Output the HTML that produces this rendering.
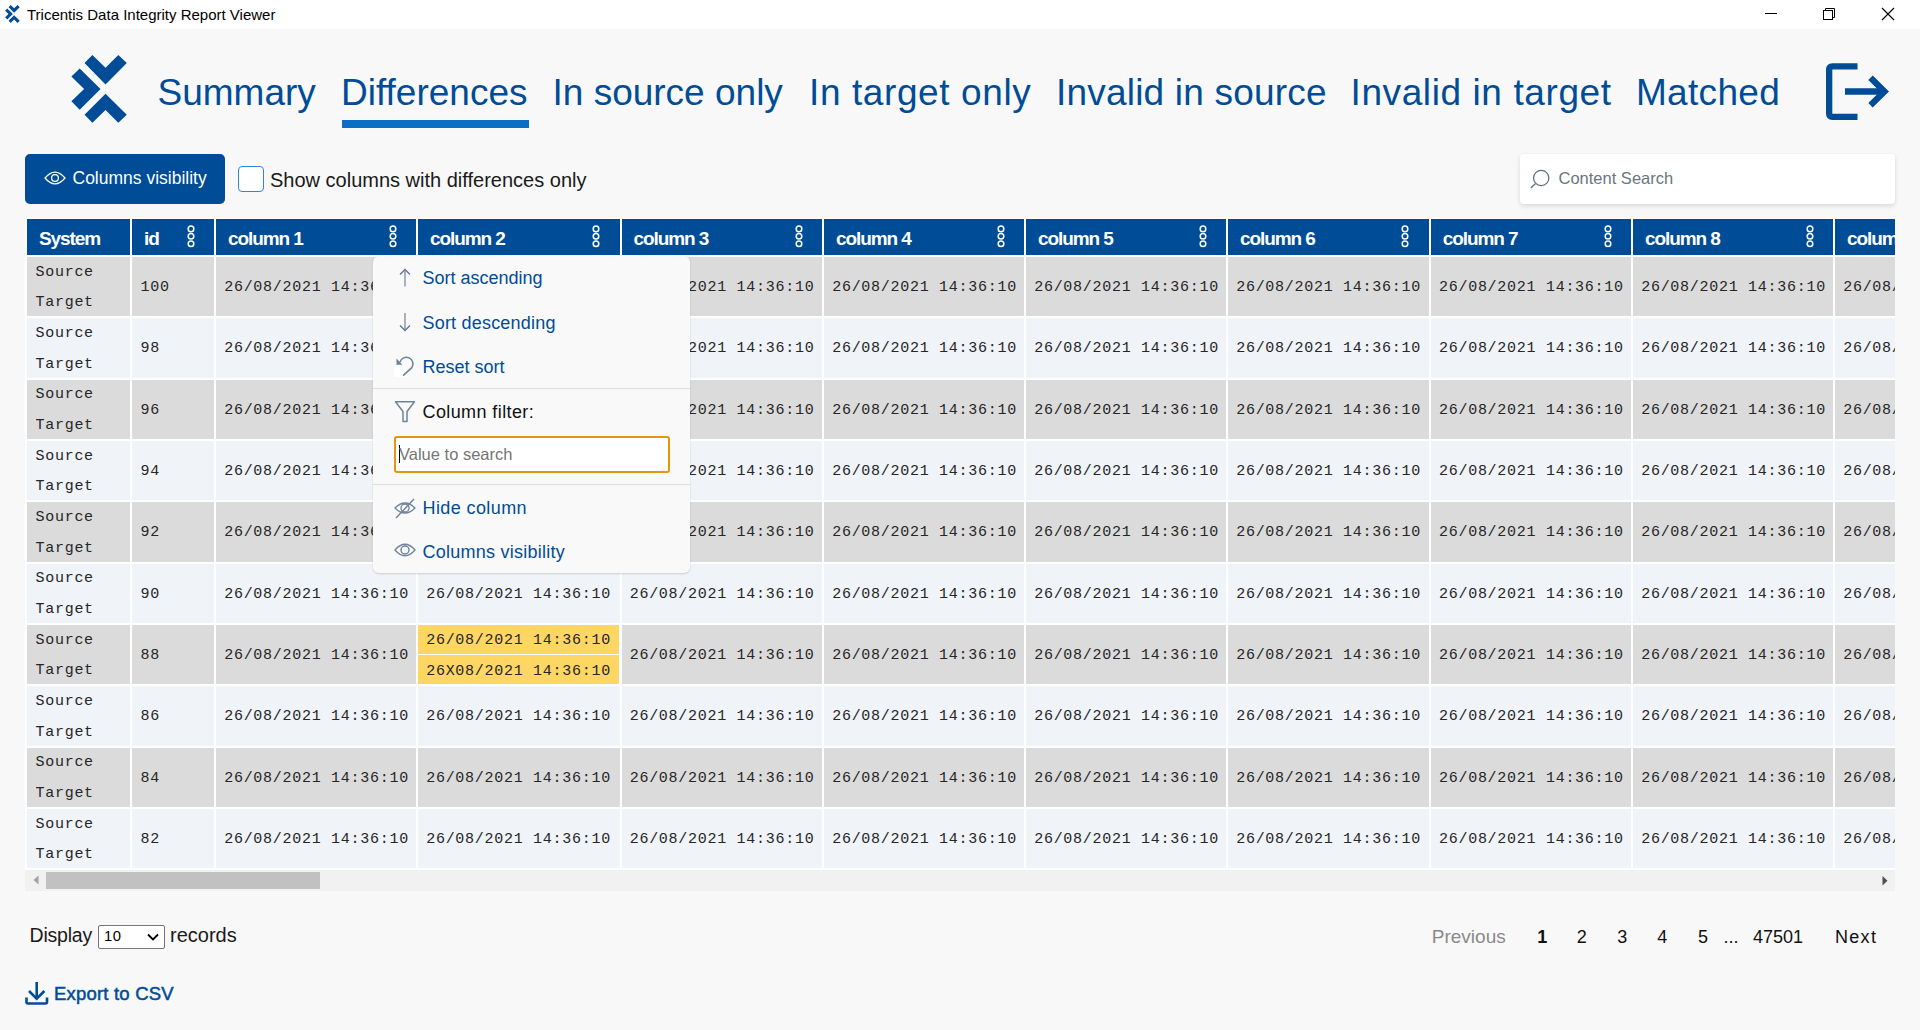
<!DOCTYPE html>
<html><head><meta charset="utf-8"><title>Tricentis Data Integrity Report Viewer</title>
<style>
html,body{margin:0;padding:0}
body{width:1920px;height:1030px;overflow:hidden;background:#f8f8f8;position:relative;font-family:'Liberation Sans', sans-serif}
.t{position:absolute;white-space:pre}
.r{position:absolute}
</style></head><body>
<div class="r" style="left:0.00px;top:0.00px;width:1920.00px;height:29.00px;background:#ffffff;"></div>
<svg class="r" style="left:4.8px;top:4.9px" width="14.8" height="18" viewBox="71 55 56 68"><polygon fill="#004c97" points="84.5,63 92.4,55 105.5,67.7 118.3,55 126.8,63 105.5,84.5"/><polygon fill="#004c97" points="71.4,76.5 79.7,68.4 100.5,88.9 79.7,109.7 71.4,101.3 84.1,88.9"/><polygon fill="#004c97" points="84.5,114.7 92.4,122.8 105.5,110 118.3,122.8 126.8,114.7 105.5,93.7"/></svg>
<div class="t" style="left:27.00px;top:7.30px;font-size:15px;line-height:15px;color:#000;font-family:'Liberation Sans', sans-serif;">Tricentis Data Integrity Report Viewer</div>
<div class="r" style="left:1765.00px;top:12.50px;width:12.00px;height:1.00px;background:#000;"></div>
<svg class="r" style="left:1822px;top:7px" width="14" height="14" viewBox="0 0 14 14"><rect x="1.5" y="3.5" width="9" height="9" fill="none" stroke="#000" stroke-width="1"/><path d="M3.5 3.5 V1.5 H12.5 V10.5 H10.5" fill="none" stroke="#000" stroke-width="1"/></svg>
<svg class="r" style="left:1881px;top:7px" width="14" height="14" viewBox="0 0 14 14"><path d="M1 1 L13 13 M13 1 L1 13" stroke="#000" stroke-width="1.1"/></svg>
<svg class="r" style="left:71px;top:55px" width="56" height="68" viewBox="71 55 56 68"><polygon fill="#004c97" points="84.5,63 92.4,55 105.5,67.7 118.3,55 126.8,63 105.5,84.5"/><polygon fill="#004c97" points="71.4,76.5 79.7,68.4 100.5,88.9 79.7,109.7 71.4,101.3 84.1,88.9"/><polygon fill="#004c97" points="84.5,114.7 92.4,122.8 105.5,110 118.3,122.8 126.8,114.7 105.5,93.7"/></svg>
<div class="t" style="left:157.50px;top:73.67px;font-size:37px;line-height:37px;color:#004c97;font-family:'Liberation Sans', sans-serif;letter-spacing:0px;">Summary</div>
<div class="t" style="left:341.00px;top:73.67px;font-size:37px;line-height:37px;color:#004c97;font-family:'Liberation Sans', sans-serif;letter-spacing:0px;">Differences</div>
<div class="t" style="left:552.50px;top:73.67px;font-size:37px;line-height:37px;color:#004c97;font-family:'Liberation Sans', sans-serif;letter-spacing:0px;">In source only</div>
<div class="t" style="left:809.00px;top:73.67px;font-size:37px;line-height:37px;color:#004c97;font-family:'Liberation Sans', sans-serif;letter-spacing:0.6px;">In target only</div>
<div class="t" style="left:1056.00px;top:73.67px;font-size:37px;line-height:37px;color:#004c97;font-family:'Liberation Sans', sans-serif;letter-spacing:0.2px;">Invalid in source</div>
<div class="t" style="left:1350.50px;top:73.67px;font-size:37px;line-height:37px;color:#004c97;font-family:'Liberation Sans', sans-serif;letter-spacing:0.6px;">Invalid in target</div>
<div class="t" style="left:1636.00px;top:73.67px;font-size:37px;line-height:37px;color:#004c97;font-family:'Liberation Sans', sans-serif;letter-spacing:0.3px;">Matched</div>
<div class="r" style="left:342.00px;top:120.00px;width:187.00px;height:7.50px;background:#0a6ec4;"></div>
<svg class="r" style="left:1820px;top:58px" width="75" height="68" viewBox="0 0 75 68"><path d="M37.5 8.35 H12.5 Q9.15 8.35 9.15 11.7 V55.5 Q9.15 58.85 12.5 58.85 H37.5" fill="none" stroke="#004c97" stroke-width="6.3"/><path d="M25 33.5 H64" stroke="#004c97" stroke-width="6.5"/><path d="M50.5 19.7 L64.5 33.5 L50.5 47.3" fill="none" stroke="#004c97" stroke-width="6.3"/></svg>
<div class="r" style="left:25.00px;top:154.00px;width:200.00px;height:50.00px;background:#004c97;border-radius:5px"></div>
<svg class="r" style="left:43px;top:170.4px" width="24" height="16" viewBox="0 0 24 16"><path d="M2 8 Q12 -3.8 22 8 Q12 19.8 2 8 Z" fill="none" stroke="#fff" stroke-width="1.25"/><circle cx="12" cy="8" r="3.4" fill="none" stroke="#fff" stroke-width="1.3"/></svg>
<div class="t" style="left:72.50px;top:170.18px;font-size:17.5px;line-height:17.5px;color:#fff;font-family:'Liberation Sans', sans-serif;">Columns visibility</div>
<div class="r" style="left:238.00px;top:166.00px;width:26.00px;height:26.00px;background:#fff;box-sizing:border-box;border:1.3px solid #2f86da;border-radius:4px"></div>
<div class="t" style="left:270.00px;top:169.87px;font-size:20px;line-height:20px;color:#1a1a1a;font-family:'Liberation Sans', sans-serif;">Show columns with differences only</div>
<div class="r" style="left:1520.00px;top:154.00px;width:375.00px;height:50.00px;background:#fff;border-radius:4px;box-shadow:0 2px 5px rgba(0,0,0,0.13)"></div>
<svg class="r" style="left:1528px;top:166px" width="24" height="24" viewBox="0 0 24 24"><circle cx="13.2" cy="12" r="7.65" fill="none" stroke="#5f6f80" stroke-width="1.25"/><path d="M7.4 17.8 L2.7 22" stroke="#5f6f80" stroke-width="1.3"/></svg>
<div class="t" style="left:1558.50px;top:170.03px;font-size:16.5px;line-height:16.5px;color:#6c757d;font-family:'Liberation Sans', sans-serif;">Content Search</div>
<div class="r" style="left:25.00px;top:217.00px;width:1870.00px;height:653.00px;background:#ffffff;"></div>
<div style="position:absolute;left:25px;top:217px;width:1870px;height:674px;overflow:hidden">
<div class="r" style="left:2.00px;top:2.00px;width:103.00px;height:36.00px;background:#004c97;"></div>
<div class="t" style="left:14.00px;top:11.71px;font-size:19px;line-height:19px;color:#fff;font-family:'Liberation Sans', sans-serif;letter-spacing:-1.1px;font-weight:bold">System</div>
<div class="r" style="left:107.00px;top:2.00px;width:82.00px;height:36.00px;background:#004c97;"></div>
<div class="t" style="left:119.00px;top:11.71px;font-size:19px;line-height:19px;color:#fff;font-family:'Liberation Sans', sans-serif;letter-spacing:-1.1px;font-weight:bold">id</div>
<svg class="r" style="left:160.50px;top:7px" width="10" height="24" viewBox="0 0 10 24"><circle cx="5" cy="4.9" r="2.8" fill="none" stroke="#fff" stroke-width="1.5"/><circle cx="5" cy="12.3" r="2.8" fill="none" stroke="#fff" stroke-width="1.5"/><circle cx="5" cy="19.8" r="2.8" fill="none" stroke="#fff" stroke-width="1.5"/></svg>
<div class="r" style="left:191.00px;top:2.00px;width:200.00px;height:36.00px;background:#004c97;"></div>
<div class="t" style="left:203.00px;top:11.71px;font-size:19px;line-height:19px;color:#fff;font-family:'Liberation Sans', sans-serif;letter-spacing:-1.1px;font-weight:bold">column 1</div>
<svg class="r" style="left:362.50px;top:7px" width="10" height="24" viewBox="0 0 10 24"><circle cx="5" cy="4.9" r="2.8" fill="none" stroke="#fff" stroke-width="1.5"/><circle cx="5" cy="12.3" r="2.8" fill="none" stroke="#fff" stroke-width="1.5"/><circle cx="5" cy="19.8" r="2.8" fill="none" stroke="#fff" stroke-width="1.5"/></svg>
<div class="r" style="left:393.00px;top:2.00px;width:201.50px;height:36.00px;background:#004c97;"></div>
<div class="t" style="left:405.00px;top:11.71px;font-size:19px;line-height:19px;color:#fff;font-family:'Liberation Sans', sans-serif;letter-spacing:-1.1px;font-weight:bold">column 2</div>
<svg class="r" style="left:566.00px;top:7px" width="10" height="24" viewBox="0 0 10 24"><circle cx="5" cy="4.9" r="2.8" fill="none" stroke="#fff" stroke-width="1.5"/><circle cx="5" cy="12.3" r="2.8" fill="none" stroke="#fff" stroke-width="1.5"/><circle cx="5" cy="19.8" r="2.8" fill="none" stroke="#fff" stroke-width="1.5"/></svg>
<div class="r" style="left:596.50px;top:2.00px;width:200.50px;height:36.00px;background:#004c97;"></div>
<div class="t" style="left:608.50px;top:11.71px;font-size:19px;line-height:19px;color:#fff;font-family:'Liberation Sans', sans-serif;letter-spacing:-1.1px;font-weight:bold">column 3</div>
<svg class="r" style="left:768.50px;top:7px" width="10" height="24" viewBox="0 0 10 24"><circle cx="5" cy="4.9" r="2.8" fill="none" stroke="#fff" stroke-width="1.5"/><circle cx="5" cy="12.3" r="2.8" fill="none" stroke="#fff" stroke-width="1.5"/><circle cx="5" cy="19.8" r="2.8" fill="none" stroke="#fff" stroke-width="1.5"/></svg>
<div class="r" style="left:799.00px;top:2.00px;width:200.00px;height:36.00px;background:#004c97;"></div>
<div class="t" style="left:811.00px;top:11.71px;font-size:19px;line-height:19px;color:#fff;font-family:'Liberation Sans', sans-serif;letter-spacing:-1.1px;font-weight:bold">column 4</div>
<svg class="r" style="left:970.50px;top:7px" width="10" height="24" viewBox="0 0 10 24"><circle cx="5" cy="4.9" r="2.8" fill="none" stroke="#fff" stroke-width="1.5"/><circle cx="5" cy="12.3" r="2.8" fill="none" stroke="#fff" stroke-width="1.5"/><circle cx="5" cy="19.8" r="2.8" fill="none" stroke="#fff" stroke-width="1.5"/></svg>
<div class="r" style="left:1001.00px;top:2.00px;width:200.00px;height:36.00px;background:#004c97;"></div>
<div class="t" style="left:1013.00px;top:11.71px;font-size:19px;line-height:19px;color:#fff;font-family:'Liberation Sans', sans-serif;letter-spacing:-1.1px;font-weight:bold">column 5</div>
<svg class="r" style="left:1172.50px;top:7px" width="10" height="24" viewBox="0 0 10 24"><circle cx="5" cy="4.9" r="2.8" fill="none" stroke="#fff" stroke-width="1.5"/><circle cx="5" cy="12.3" r="2.8" fill="none" stroke="#fff" stroke-width="1.5"/><circle cx="5" cy="19.8" r="2.8" fill="none" stroke="#fff" stroke-width="1.5"/></svg>
<div class="r" style="left:1203.00px;top:2.00px;width:200.80px;height:36.00px;background:#004c97;"></div>
<div class="t" style="left:1215.00px;top:11.71px;font-size:19px;line-height:19px;color:#fff;font-family:'Liberation Sans', sans-serif;letter-spacing:-1.1px;font-weight:bold">column 6</div>
<svg class="r" style="left:1375.30px;top:7px" width="10" height="24" viewBox="0 0 10 24"><circle cx="5" cy="4.9" r="2.8" fill="none" stroke="#fff" stroke-width="1.5"/><circle cx="5" cy="12.3" r="2.8" fill="none" stroke="#fff" stroke-width="1.5"/><circle cx="5" cy="19.8" r="2.8" fill="none" stroke="#fff" stroke-width="1.5"/></svg>
<div class="r" style="left:1405.80px;top:2.00px;width:200.20px;height:36.00px;background:#004c97;"></div>
<div class="t" style="left:1417.80px;top:11.71px;font-size:19px;line-height:19px;color:#fff;font-family:'Liberation Sans', sans-serif;letter-spacing:-1.1px;font-weight:bold">column 7</div>
<svg class="r" style="left:1577.50px;top:7px" width="10" height="24" viewBox="0 0 10 24"><circle cx="5" cy="4.9" r="2.8" fill="none" stroke="#fff" stroke-width="1.5"/><circle cx="5" cy="12.3" r="2.8" fill="none" stroke="#fff" stroke-width="1.5"/><circle cx="5" cy="19.8" r="2.8" fill="none" stroke="#fff" stroke-width="1.5"/></svg>
<div class="r" style="left:1608.00px;top:2.00px;width:200.00px;height:36.00px;background:#004c97;"></div>
<div class="t" style="left:1620.00px;top:11.71px;font-size:19px;line-height:19px;color:#fff;font-family:'Liberation Sans', sans-serif;letter-spacing:-1.1px;font-weight:bold">column 8</div>
<svg class="r" style="left:1779.50px;top:7px" width="10" height="24" viewBox="0 0 10 24"><circle cx="5" cy="4.9" r="2.8" fill="none" stroke="#fff" stroke-width="1.5"/><circle cx="5" cy="12.3" r="2.8" fill="none" stroke="#fff" stroke-width="1.5"/><circle cx="5" cy="19.8" r="2.8" fill="none" stroke="#fff" stroke-width="1.5"/></svg>
<div class="r" style="left:1810.00px;top:2.00px;width:200.00px;height:36.00px;background:#004c97;"></div>
<div class="t" style="left:1822.00px;top:11.71px;font-size:19px;line-height:19px;color:#fff;font-family:'Liberation Sans', sans-serif;letter-spacing:-1.1px;font-weight:bold">column 9</div>
<svg class="r" style="left:1981.50px;top:7px" width="10" height="24" viewBox="0 0 10 24"><circle cx="5" cy="4.9" r="2.8" fill="none" stroke="#fff" stroke-width="1.5"/><circle cx="5" cy="12.3" r="2.8" fill="none" stroke="#fff" stroke-width="1.5"/><circle cx="5" cy="19.8" r="2.8" fill="none" stroke="#fff" stroke-width="1.5"/></svg>
<div class="r" style="left:2.00px;top:40.00px;width:103.00px;height:59.33px;background:#dbdbdb;"></div>
<div class="t" style="left:10.50px;top:47.81px;font-size:15px;line-height:15px;color:#262626;font-family:'Liberation Mono', monospace;letter-spacing:0.7200000000000006px;">Source</div>
<div class="t" style="left:10.50px;top:78.31px;font-size:15px;line-height:15px;color:#262626;font-family:'Liberation Mono', monospace;letter-spacing:0.7200000000000006px;">Target</div>
<div class="r" style="left:107.00px;top:40.00px;width:82.00px;height:59.33px;background:#dbdbdb;"></div>
<div class="t" style="left:115.50px;top:63.01px;font-size:15px;line-height:15px;color:#262626;font-family:'Liberation Mono', monospace;letter-spacing:0.7200000000000006px;">100</div>
<div class="r" style="left:191.00px;top:40.00px;width:200.00px;height:59.33px;background:#dbdbdb;"></div>
<div class="t" style="left:199.20px;top:63.01px;font-size:15px;line-height:15px;color:#262626;font-family:'Liberation Mono', monospace;letter-spacing:0.7200000000000006px;">26/08/2021 14:36:10</div>
<div class="r" style="left:393.00px;top:40.00px;width:201.50px;height:59.33px;background:#dbdbdb;"></div>
<div class="t" style="left:401.20px;top:63.01px;font-size:15px;line-height:15px;color:#262626;font-family:'Liberation Mono', monospace;letter-spacing:0.7200000000000006px;">26/08/2021 14:36:10</div>
<div class="r" style="left:596.50px;top:40.00px;width:200.50px;height:59.33px;background:#dbdbdb;"></div>
<div class="t" style="left:604.70px;top:63.01px;font-size:15px;line-height:15px;color:#262626;font-family:'Liberation Mono', monospace;letter-spacing:0.7200000000000006px;">26/08/2021 14:36:10</div>
<div class="r" style="left:799.00px;top:40.00px;width:200.00px;height:59.33px;background:#dbdbdb;"></div>
<div class="t" style="left:807.20px;top:63.01px;font-size:15px;line-height:15px;color:#262626;font-family:'Liberation Mono', monospace;letter-spacing:0.7200000000000006px;">26/08/2021 14:36:10</div>
<div class="r" style="left:1001.00px;top:40.00px;width:200.00px;height:59.33px;background:#dbdbdb;"></div>
<div class="t" style="left:1009.20px;top:63.01px;font-size:15px;line-height:15px;color:#262626;font-family:'Liberation Mono', monospace;letter-spacing:0.7200000000000006px;">26/08/2021 14:36:10</div>
<div class="r" style="left:1203.00px;top:40.00px;width:200.80px;height:59.33px;background:#dbdbdb;"></div>
<div class="t" style="left:1211.20px;top:63.01px;font-size:15px;line-height:15px;color:#262626;font-family:'Liberation Mono', monospace;letter-spacing:0.7200000000000006px;">26/08/2021 14:36:10</div>
<div class="r" style="left:1405.80px;top:40.00px;width:200.20px;height:59.33px;background:#dbdbdb;"></div>
<div class="t" style="left:1414.00px;top:63.01px;font-size:15px;line-height:15px;color:#262626;font-family:'Liberation Mono', monospace;letter-spacing:0.7200000000000006px;">26/08/2021 14:36:10</div>
<div class="r" style="left:1608.00px;top:40.00px;width:200.00px;height:59.33px;background:#dbdbdb;"></div>
<div class="t" style="left:1616.20px;top:63.01px;font-size:15px;line-height:15px;color:#262626;font-family:'Liberation Mono', monospace;letter-spacing:0.7200000000000006px;">26/08/2021 14:36:10</div>
<div class="r" style="left:1810.00px;top:40.00px;width:200.00px;height:59.33px;background:#dbdbdb;"></div>
<div class="t" style="left:1818.20px;top:63.01px;font-size:15px;line-height:15px;color:#262626;font-family:'Liberation Mono', monospace;letter-spacing:0.7200000000000006px;">26/08/2021 14:36:10</div>
<div class="r" style="left:2.00px;top:101.33px;width:103.00px;height:59.33px;background:#f0f3f8;"></div>
<div class="t" style="left:10.50px;top:109.14px;font-size:15px;line-height:15px;color:#262626;font-family:'Liberation Mono', monospace;letter-spacing:0.7200000000000006px;">Source</div>
<div class="t" style="left:10.50px;top:139.64px;font-size:15px;line-height:15px;color:#262626;font-family:'Liberation Mono', monospace;letter-spacing:0.7200000000000006px;">Target</div>
<div class="r" style="left:107.00px;top:101.33px;width:82.00px;height:59.33px;background:#f0f3f8;"></div>
<div class="t" style="left:115.50px;top:124.34px;font-size:15px;line-height:15px;color:#262626;font-family:'Liberation Mono', monospace;letter-spacing:0.7200000000000006px;">98</div>
<div class="r" style="left:191.00px;top:101.33px;width:200.00px;height:59.33px;background:#f0f3f8;"></div>
<div class="t" style="left:199.20px;top:124.34px;font-size:15px;line-height:15px;color:#262626;font-family:'Liberation Mono', monospace;letter-spacing:0.7200000000000006px;">26/08/2021 14:36:10</div>
<div class="r" style="left:393.00px;top:101.33px;width:201.50px;height:59.33px;background:#f0f3f8;"></div>
<div class="t" style="left:401.20px;top:124.34px;font-size:15px;line-height:15px;color:#262626;font-family:'Liberation Mono', monospace;letter-spacing:0.7200000000000006px;">26/08/2021 14:36:10</div>
<div class="r" style="left:596.50px;top:101.33px;width:200.50px;height:59.33px;background:#f0f3f8;"></div>
<div class="t" style="left:604.70px;top:124.34px;font-size:15px;line-height:15px;color:#262626;font-family:'Liberation Mono', monospace;letter-spacing:0.7200000000000006px;">26/08/2021 14:36:10</div>
<div class="r" style="left:799.00px;top:101.33px;width:200.00px;height:59.33px;background:#f0f3f8;"></div>
<div class="t" style="left:807.20px;top:124.34px;font-size:15px;line-height:15px;color:#262626;font-family:'Liberation Mono', monospace;letter-spacing:0.7200000000000006px;">26/08/2021 14:36:10</div>
<div class="r" style="left:1001.00px;top:101.33px;width:200.00px;height:59.33px;background:#f0f3f8;"></div>
<div class="t" style="left:1009.20px;top:124.34px;font-size:15px;line-height:15px;color:#262626;font-family:'Liberation Mono', monospace;letter-spacing:0.7200000000000006px;">26/08/2021 14:36:10</div>
<div class="r" style="left:1203.00px;top:101.33px;width:200.80px;height:59.33px;background:#f0f3f8;"></div>
<div class="t" style="left:1211.20px;top:124.34px;font-size:15px;line-height:15px;color:#262626;font-family:'Liberation Mono', monospace;letter-spacing:0.7200000000000006px;">26/08/2021 14:36:10</div>
<div class="r" style="left:1405.80px;top:101.33px;width:200.20px;height:59.33px;background:#f0f3f8;"></div>
<div class="t" style="left:1414.00px;top:124.34px;font-size:15px;line-height:15px;color:#262626;font-family:'Liberation Mono', monospace;letter-spacing:0.7200000000000006px;">26/08/2021 14:36:10</div>
<div class="r" style="left:1608.00px;top:101.33px;width:200.00px;height:59.33px;background:#f0f3f8;"></div>
<div class="t" style="left:1616.20px;top:124.34px;font-size:15px;line-height:15px;color:#262626;font-family:'Liberation Mono', monospace;letter-spacing:0.7200000000000006px;">26/08/2021 14:36:10</div>
<div class="r" style="left:1810.00px;top:101.33px;width:200.00px;height:59.33px;background:#f0f3f8;"></div>
<div class="t" style="left:1818.20px;top:124.34px;font-size:15px;line-height:15px;color:#262626;font-family:'Liberation Mono', monospace;letter-spacing:0.7200000000000006px;">26/08/2021 14:36:10</div>
<div class="r" style="left:2.00px;top:162.66px;width:103.00px;height:59.33px;background:#dbdbdb;"></div>
<div class="t" style="left:10.50px;top:170.47px;font-size:15px;line-height:15px;color:#262626;font-family:'Liberation Mono', monospace;letter-spacing:0.7200000000000006px;">Source</div>
<div class="t" style="left:10.50px;top:200.97px;font-size:15px;line-height:15px;color:#262626;font-family:'Liberation Mono', monospace;letter-spacing:0.7200000000000006px;">Target</div>
<div class="r" style="left:107.00px;top:162.66px;width:82.00px;height:59.33px;background:#dbdbdb;"></div>
<div class="t" style="left:115.50px;top:185.67px;font-size:15px;line-height:15px;color:#262626;font-family:'Liberation Mono', monospace;letter-spacing:0.7200000000000006px;">96</div>
<div class="r" style="left:191.00px;top:162.66px;width:200.00px;height:59.33px;background:#dbdbdb;"></div>
<div class="t" style="left:199.20px;top:185.67px;font-size:15px;line-height:15px;color:#262626;font-family:'Liberation Mono', monospace;letter-spacing:0.7200000000000006px;">26/08/2021 14:36:10</div>
<div class="r" style="left:393.00px;top:162.66px;width:201.50px;height:59.33px;background:#dbdbdb;"></div>
<div class="t" style="left:401.20px;top:185.67px;font-size:15px;line-height:15px;color:#262626;font-family:'Liberation Mono', monospace;letter-spacing:0.7200000000000006px;">26/08/2021 14:36:10</div>
<div class="r" style="left:596.50px;top:162.66px;width:200.50px;height:59.33px;background:#dbdbdb;"></div>
<div class="t" style="left:604.70px;top:185.67px;font-size:15px;line-height:15px;color:#262626;font-family:'Liberation Mono', monospace;letter-spacing:0.7200000000000006px;">26/08/2021 14:36:10</div>
<div class="r" style="left:799.00px;top:162.66px;width:200.00px;height:59.33px;background:#dbdbdb;"></div>
<div class="t" style="left:807.20px;top:185.67px;font-size:15px;line-height:15px;color:#262626;font-family:'Liberation Mono', monospace;letter-spacing:0.7200000000000006px;">26/08/2021 14:36:10</div>
<div class="r" style="left:1001.00px;top:162.66px;width:200.00px;height:59.33px;background:#dbdbdb;"></div>
<div class="t" style="left:1009.20px;top:185.67px;font-size:15px;line-height:15px;color:#262626;font-family:'Liberation Mono', monospace;letter-spacing:0.7200000000000006px;">26/08/2021 14:36:10</div>
<div class="r" style="left:1203.00px;top:162.66px;width:200.80px;height:59.33px;background:#dbdbdb;"></div>
<div class="t" style="left:1211.20px;top:185.67px;font-size:15px;line-height:15px;color:#262626;font-family:'Liberation Mono', monospace;letter-spacing:0.7200000000000006px;">26/08/2021 14:36:10</div>
<div class="r" style="left:1405.80px;top:162.66px;width:200.20px;height:59.33px;background:#dbdbdb;"></div>
<div class="t" style="left:1414.00px;top:185.67px;font-size:15px;line-height:15px;color:#262626;font-family:'Liberation Mono', monospace;letter-spacing:0.7200000000000006px;">26/08/2021 14:36:10</div>
<div class="r" style="left:1608.00px;top:162.66px;width:200.00px;height:59.33px;background:#dbdbdb;"></div>
<div class="t" style="left:1616.20px;top:185.67px;font-size:15px;line-height:15px;color:#262626;font-family:'Liberation Mono', monospace;letter-spacing:0.7200000000000006px;">26/08/2021 14:36:10</div>
<div class="r" style="left:1810.00px;top:162.66px;width:200.00px;height:59.33px;background:#dbdbdb;"></div>
<div class="t" style="left:1818.20px;top:185.67px;font-size:15px;line-height:15px;color:#262626;font-family:'Liberation Mono', monospace;letter-spacing:0.7200000000000006px;">26/08/2021 14:36:10</div>
<div class="r" style="left:2.00px;top:223.99px;width:103.00px;height:59.33px;background:#f0f3f8;"></div>
<div class="t" style="left:10.50px;top:231.80px;font-size:15px;line-height:15px;color:#262626;font-family:'Liberation Mono', monospace;letter-spacing:0.7200000000000006px;">Source</div>
<div class="t" style="left:10.50px;top:262.30px;font-size:15px;line-height:15px;color:#262626;font-family:'Liberation Mono', monospace;letter-spacing:0.7200000000000006px;">Target</div>
<div class="r" style="left:107.00px;top:223.99px;width:82.00px;height:59.33px;background:#f0f3f8;"></div>
<div class="t" style="left:115.50px;top:247.00px;font-size:15px;line-height:15px;color:#262626;font-family:'Liberation Mono', monospace;letter-spacing:0.7200000000000006px;">94</div>
<div class="r" style="left:191.00px;top:223.99px;width:200.00px;height:59.33px;background:#f0f3f8;"></div>
<div class="t" style="left:199.20px;top:247.00px;font-size:15px;line-height:15px;color:#262626;font-family:'Liberation Mono', monospace;letter-spacing:0.7200000000000006px;">26/08/2021 14:36:10</div>
<div class="r" style="left:393.00px;top:223.99px;width:201.50px;height:59.33px;background:#f0f3f8;"></div>
<div class="t" style="left:401.20px;top:247.00px;font-size:15px;line-height:15px;color:#262626;font-family:'Liberation Mono', monospace;letter-spacing:0.7200000000000006px;">26/08/2021 14:36:10</div>
<div class="r" style="left:596.50px;top:223.99px;width:200.50px;height:59.33px;background:#f0f3f8;"></div>
<div class="t" style="left:604.70px;top:247.00px;font-size:15px;line-height:15px;color:#262626;font-family:'Liberation Mono', monospace;letter-spacing:0.7200000000000006px;">26/08/2021 14:36:10</div>
<div class="r" style="left:799.00px;top:223.99px;width:200.00px;height:59.33px;background:#f0f3f8;"></div>
<div class="t" style="left:807.20px;top:247.00px;font-size:15px;line-height:15px;color:#262626;font-family:'Liberation Mono', monospace;letter-spacing:0.7200000000000006px;">26/08/2021 14:36:10</div>
<div class="r" style="left:1001.00px;top:223.99px;width:200.00px;height:59.33px;background:#f0f3f8;"></div>
<div class="t" style="left:1009.20px;top:247.00px;font-size:15px;line-height:15px;color:#262626;font-family:'Liberation Mono', monospace;letter-spacing:0.7200000000000006px;">26/08/2021 14:36:10</div>
<div class="r" style="left:1203.00px;top:223.99px;width:200.80px;height:59.33px;background:#f0f3f8;"></div>
<div class="t" style="left:1211.20px;top:247.00px;font-size:15px;line-height:15px;color:#262626;font-family:'Liberation Mono', monospace;letter-spacing:0.7200000000000006px;">26/08/2021 14:36:10</div>
<div class="r" style="left:1405.80px;top:223.99px;width:200.20px;height:59.33px;background:#f0f3f8;"></div>
<div class="t" style="left:1414.00px;top:247.00px;font-size:15px;line-height:15px;color:#262626;font-family:'Liberation Mono', monospace;letter-spacing:0.7200000000000006px;">26/08/2021 14:36:10</div>
<div class="r" style="left:1608.00px;top:223.99px;width:200.00px;height:59.33px;background:#f0f3f8;"></div>
<div class="t" style="left:1616.20px;top:247.00px;font-size:15px;line-height:15px;color:#262626;font-family:'Liberation Mono', monospace;letter-spacing:0.7200000000000006px;">26/08/2021 14:36:10</div>
<div class="r" style="left:1810.00px;top:223.99px;width:200.00px;height:59.33px;background:#f0f3f8;"></div>
<div class="t" style="left:1818.20px;top:247.00px;font-size:15px;line-height:15px;color:#262626;font-family:'Liberation Mono', monospace;letter-spacing:0.7200000000000006px;">26/08/2021 14:36:10</div>
<div class="r" style="left:2.00px;top:285.32px;width:103.00px;height:59.33px;background:#dbdbdb;"></div>
<div class="t" style="left:10.50px;top:293.13px;font-size:15px;line-height:15px;color:#262626;font-family:'Liberation Mono', monospace;letter-spacing:0.7200000000000006px;">Source</div>
<div class="t" style="left:10.50px;top:323.63px;font-size:15px;line-height:15px;color:#262626;font-family:'Liberation Mono', monospace;letter-spacing:0.7200000000000006px;">Target</div>
<div class="r" style="left:107.00px;top:285.32px;width:82.00px;height:59.33px;background:#dbdbdb;"></div>
<div class="t" style="left:115.50px;top:308.33px;font-size:15px;line-height:15px;color:#262626;font-family:'Liberation Mono', monospace;letter-spacing:0.7200000000000006px;">92</div>
<div class="r" style="left:191.00px;top:285.32px;width:200.00px;height:59.33px;background:#dbdbdb;"></div>
<div class="t" style="left:199.20px;top:308.33px;font-size:15px;line-height:15px;color:#262626;font-family:'Liberation Mono', monospace;letter-spacing:0.7200000000000006px;">26/08/2021 14:36:10</div>
<div class="r" style="left:393.00px;top:285.32px;width:201.50px;height:59.33px;background:#dbdbdb;"></div>
<div class="t" style="left:401.20px;top:308.33px;font-size:15px;line-height:15px;color:#262626;font-family:'Liberation Mono', monospace;letter-spacing:0.7200000000000006px;">26/08/2021 14:36:10</div>
<div class="r" style="left:596.50px;top:285.32px;width:200.50px;height:59.33px;background:#dbdbdb;"></div>
<div class="t" style="left:604.70px;top:308.33px;font-size:15px;line-height:15px;color:#262626;font-family:'Liberation Mono', monospace;letter-spacing:0.7200000000000006px;">26/08/2021 14:36:10</div>
<div class="r" style="left:799.00px;top:285.32px;width:200.00px;height:59.33px;background:#dbdbdb;"></div>
<div class="t" style="left:807.20px;top:308.33px;font-size:15px;line-height:15px;color:#262626;font-family:'Liberation Mono', monospace;letter-spacing:0.7200000000000006px;">26/08/2021 14:36:10</div>
<div class="r" style="left:1001.00px;top:285.32px;width:200.00px;height:59.33px;background:#dbdbdb;"></div>
<div class="t" style="left:1009.20px;top:308.33px;font-size:15px;line-height:15px;color:#262626;font-family:'Liberation Mono', monospace;letter-spacing:0.7200000000000006px;">26/08/2021 14:36:10</div>
<div class="r" style="left:1203.00px;top:285.32px;width:200.80px;height:59.33px;background:#dbdbdb;"></div>
<div class="t" style="left:1211.20px;top:308.33px;font-size:15px;line-height:15px;color:#262626;font-family:'Liberation Mono', monospace;letter-spacing:0.7200000000000006px;">26/08/2021 14:36:10</div>
<div class="r" style="left:1405.80px;top:285.32px;width:200.20px;height:59.33px;background:#dbdbdb;"></div>
<div class="t" style="left:1414.00px;top:308.33px;font-size:15px;line-height:15px;color:#262626;font-family:'Liberation Mono', monospace;letter-spacing:0.7200000000000006px;">26/08/2021 14:36:10</div>
<div class="r" style="left:1608.00px;top:285.32px;width:200.00px;height:59.33px;background:#dbdbdb;"></div>
<div class="t" style="left:1616.20px;top:308.33px;font-size:15px;line-height:15px;color:#262626;font-family:'Liberation Mono', monospace;letter-spacing:0.7200000000000006px;">26/08/2021 14:36:10</div>
<div class="r" style="left:1810.00px;top:285.32px;width:200.00px;height:59.33px;background:#dbdbdb;"></div>
<div class="t" style="left:1818.20px;top:308.33px;font-size:15px;line-height:15px;color:#262626;font-family:'Liberation Mono', monospace;letter-spacing:0.7200000000000006px;">26/08/2021 14:36:10</div>
<div class="r" style="left:2.00px;top:346.65px;width:103.00px;height:59.33px;background:#f0f3f8;"></div>
<div class="t" style="left:10.50px;top:354.46px;font-size:15px;line-height:15px;color:#262626;font-family:'Liberation Mono', monospace;letter-spacing:0.7200000000000006px;">Source</div>
<div class="t" style="left:10.50px;top:384.96px;font-size:15px;line-height:15px;color:#262626;font-family:'Liberation Mono', monospace;letter-spacing:0.7200000000000006px;">Target</div>
<div class="r" style="left:107.00px;top:346.65px;width:82.00px;height:59.33px;background:#f0f3f8;"></div>
<div class="t" style="left:115.50px;top:369.66px;font-size:15px;line-height:15px;color:#262626;font-family:'Liberation Mono', monospace;letter-spacing:0.7200000000000006px;">90</div>
<div class="r" style="left:191.00px;top:346.65px;width:200.00px;height:59.33px;background:#f0f3f8;"></div>
<div class="t" style="left:199.20px;top:369.66px;font-size:15px;line-height:15px;color:#262626;font-family:'Liberation Mono', monospace;letter-spacing:0.7200000000000006px;">26/08/2021 14:36:10</div>
<div class="r" style="left:393.00px;top:346.65px;width:201.50px;height:59.33px;background:#f0f3f8;"></div>
<div class="t" style="left:401.20px;top:369.66px;font-size:15px;line-height:15px;color:#262626;font-family:'Liberation Mono', monospace;letter-spacing:0.7200000000000006px;">26/08/2021 14:36:10</div>
<div class="r" style="left:596.50px;top:346.65px;width:200.50px;height:59.33px;background:#f0f3f8;"></div>
<div class="t" style="left:604.70px;top:369.66px;font-size:15px;line-height:15px;color:#262626;font-family:'Liberation Mono', monospace;letter-spacing:0.7200000000000006px;">26/08/2021 14:36:10</div>
<div class="r" style="left:799.00px;top:346.65px;width:200.00px;height:59.33px;background:#f0f3f8;"></div>
<div class="t" style="left:807.20px;top:369.66px;font-size:15px;line-height:15px;color:#262626;font-family:'Liberation Mono', monospace;letter-spacing:0.7200000000000006px;">26/08/2021 14:36:10</div>
<div class="r" style="left:1001.00px;top:346.65px;width:200.00px;height:59.33px;background:#f0f3f8;"></div>
<div class="t" style="left:1009.20px;top:369.66px;font-size:15px;line-height:15px;color:#262626;font-family:'Liberation Mono', monospace;letter-spacing:0.7200000000000006px;">26/08/2021 14:36:10</div>
<div class="r" style="left:1203.00px;top:346.65px;width:200.80px;height:59.33px;background:#f0f3f8;"></div>
<div class="t" style="left:1211.20px;top:369.66px;font-size:15px;line-height:15px;color:#262626;font-family:'Liberation Mono', monospace;letter-spacing:0.7200000000000006px;">26/08/2021 14:36:10</div>
<div class="r" style="left:1405.80px;top:346.65px;width:200.20px;height:59.33px;background:#f0f3f8;"></div>
<div class="t" style="left:1414.00px;top:369.66px;font-size:15px;line-height:15px;color:#262626;font-family:'Liberation Mono', monospace;letter-spacing:0.7200000000000006px;">26/08/2021 14:36:10</div>
<div class="r" style="left:1608.00px;top:346.65px;width:200.00px;height:59.33px;background:#f0f3f8;"></div>
<div class="t" style="left:1616.20px;top:369.66px;font-size:15px;line-height:15px;color:#262626;font-family:'Liberation Mono', monospace;letter-spacing:0.7200000000000006px;">26/08/2021 14:36:10</div>
<div class="r" style="left:1810.00px;top:346.65px;width:200.00px;height:59.33px;background:#f0f3f8;"></div>
<div class="t" style="left:1818.20px;top:369.66px;font-size:15px;line-height:15px;color:#262626;font-family:'Liberation Mono', monospace;letter-spacing:0.7200000000000006px;">26/08/2021 14:36:10</div>
<div class="r" style="left:2.00px;top:407.98px;width:103.00px;height:59.33px;background:#dbdbdb;"></div>
<div class="t" style="left:10.50px;top:415.79px;font-size:15px;line-height:15px;color:#262626;font-family:'Liberation Mono', monospace;letter-spacing:0.7200000000000006px;">Source</div>
<div class="t" style="left:10.50px;top:446.29px;font-size:15px;line-height:15px;color:#262626;font-family:'Liberation Mono', monospace;letter-spacing:0.7200000000000006px;">Target</div>
<div class="r" style="left:107.00px;top:407.98px;width:82.00px;height:59.33px;background:#dbdbdb;"></div>
<div class="t" style="left:115.50px;top:430.99px;font-size:15px;line-height:15px;color:#262626;font-family:'Liberation Mono', monospace;letter-spacing:0.7200000000000006px;">88</div>
<div class="r" style="left:191.00px;top:407.98px;width:200.00px;height:59.33px;background:#dbdbdb;"></div>
<div class="t" style="left:199.20px;top:430.99px;font-size:15px;line-height:15px;color:#262626;font-family:'Liberation Mono', monospace;letter-spacing:0.7200000000000006px;">26/08/2021 14:36:10</div>
<div class="r" style="left:393.00px;top:407.98px;width:200.70px;height:28.70px;background:#fdd663;"></div>
<div class="r" style="left:393.00px;top:437.98px;width:200.70px;height:29.33px;background:#fdd663;"></div>
<div class="r" style="left:393.00px;top:436.68px;width:201.50px;height:1.30px;background:#fff;"></div>
<div class="r" style="left:593.70px;top:407.98px;width:0.80px;height:59.33px;background:#fff;"></div>
<div class="t" style="left:401.20px;top:416.39px;font-size:15px;line-height:15px;color:#262626;font-family:'Liberation Mono', monospace;letter-spacing:0.7200000000000006px;">26/08/2021 14:36:10</div>
<div class="t" style="left:401.20px;top:446.59px;font-size:15px;line-height:15px;color:#262626;font-family:'Liberation Mono', monospace;letter-spacing:0.7200000000000006px;">26X08/2021 14:36:10</div>
<div class="r" style="left:596.50px;top:407.98px;width:200.50px;height:59.33px;background:#dbdbdb;"></div>
<div class="t" style="left:604.70px;top:430.99px;font-size:15px;line-height:15px;color:#262626;font-family:'Liberation Mono', monospace;letter-spacing:0.7200000000000006px;">26/08/2021 14:36:10</div>
<div class="r" style="left:799.00px;top:407.98px;width:200.00px;height:59.33px;background:#dbdbdb;"></div>
<div class="t" style="left:807.20px;top:430.99px;font-size:15px;line-height:15px;color:#262626;font-family:'Liberation Mono', monospace;letter-spacing:0.7200000000000006px;">26/08/2021 14:36:10</div>
<div class="r" style="left:1001.00px;top:407.98px;width:200.00px;height:59.33px;background:#dbdbdb;"></div>
<div class="t" style="left:1009.20px;top:430.99px;font-size:15px;line-height:15px;color:#262626;font-family:'Liberation Mono', monospace;letter-spacing:0.7200000000000006px;">26/08/2021 14:36:10</div>
<div class="r" style="left:1203.00px;top:407.98px;width:200.80px;height:59.33px;background:#dbdbdb;"></div>
<div class="t" style="left:1211.20px;top:430.99px;font-size:15px;line-height:15px;color:#262626;font-family:'Liberation Mono', monospace;letter-spacing:0.7200000000000006px;">26/08/2021 14:36:10</div>
<div class="r" style="left:1405.80px;top:407.98px;width:200.20px;height:59.33px;background:#dbdbdb;"></div>
<div class="t" style="left:1414.00px;top:430.99px;font-size:15px;line-height:15px;color:#262626;font-family:'Liberation Mono', monospace;letter-spacing:0.7200000000000006px;">26/08/2021 14:36:10</div>
<div class="r" style="left:1608.00px;top:407.98px;width:200.00px;height:59.33px;background:#dbdbdb;"></div>
<div class="t" style="left:1616.20px;top:430.99px;font-size:15px;line-height:15px;color:#262626;font-family:'Liberation Mono', monospace;letter-spacing:0.7200000000000006px;">26/08/2021 14:36:10</div>
<div class="r" style="left:1810.00px;top:407.98px;width:200.00px;height:59.33px;background:#dbdbdb;"></div>
<div class="t" style="left:1818.20px;top:430.99px;font-size:15px;line-height:15px;color:#262626;font-family:'Liberation Mono', monospace;letter-spacing:0.7200000000000006px;">26/08/2021 14:36:10</div>
<div class="r" style="left:2.00px;top:469.31px;width:103.00px;height:59.33px;background:#f0f3f8;"></div>
<div class="t" style="left:10.50px;top:477.12px;font-size:15px;line-height:15px;color:#262626;font-family:'Liberation Mono', monospace;letter-spacing:0.7200000000000006px;">Source</div>
<div class="t" style="left:10.50px;top:507.62px;font-size:15px;line-height:15px;color:#262626;font-family:'Liberation Mono', monospace;letter-spacing:0.7200000000000006px;">Target</div>
<div class="r" style="left:107.00px;top:469.31px;width:82.00px;height:59.33px;background:#f0f3f8;"></div>
<div class="t" style="left:115.50px;top:492.32px;font-size:15px;line-height:15px;color:#262626;font-family:'Liberation Mono', monospace;letter-spacing:0.7200000000000006px;">86</div>
<div class="r" style="left:191.00px;top:469.31px;width:200.00px;height:59.33px;background:#f0f3f8;"></div>
<div class="t" style="left:199.20px;top:492.32px;font-size:15px;line-height:15px;color:#262626;font-family:'Liberation Mono', monospace;letter-spacing:0.7200000000000006px;">26/08/2021 14:36:10</div>
<div class="r" style="left:393.00px;top:469.31px;width:201.50px;height:59.33px;background:#f0f3f8;"></div>
<div class="t" style="left:401.20px;top:492.32px;font-size:15px;line-height:15px;color:#262626;font-family:'Liberation Mono', monospace;letter-spacing:0.7200000000000006px;">26/08/2021 14:36:10</div>
<div class="r" style="left:596.50px;top:469.31px;width:200.50px;height:59.33px;background:#f0f3f8;"></div>
<div class="t" style="left:604.70px;top:492.32px;font-size:15px;line-height:15px;color:#262626;font-family:'Liberation Mono', monospace;letter-spacing:0.7200000000000006px;">26/08/2021 14:36:10</div>
<div class="r" style="left:799.00px;top:469.31px;width:200.00px;height:59.33px;background:#f0f3f8;"></div>
<div class="t" style="left:807.20px;top:492.32px;font-size:15px;line-height:15px;color:#262626;font-family:'Liberation Mono', monospace;letter-spacing:0.7200000000000006px;">26/08/2021 14:36:10</div>
<div class="r" style="left:1001.00px;top:469.31px;width:200.00px;height:59.33px;background:#f0f3f8;"></div>
<div class="t" style="left:1009.20px;top:492.32px;font-size:15px;line-height:15px;color:#262626;font-family:'Liberation Mono', monospace;letter-spacing:0.7200000000000006px;">26/08/2021 14:36:10</div>
<div class="r" style="left:1203.00px;top:469.31px;width:200.80px;height:59.33px;background:#f0f3f8;"></div>
<div class="t" style="left:1211.20px;top:492.32px;font-size:15px;line-height:15px;color:#262626;font-family:'Liberation Mono', monospace;letter-spacing:0.7200000000000006px;">26/08/2021 14:36:10</div>
<div class="r" style="left:1405.80px;top:469.31px;width:200.20px;height:59.33px;background:#f0f3f8;"></div>
<div class="t" style="left:1414.00px;top:492.32px;font-size:15px;line-height:15px;color:#262626;font-family:'Liberation Mono', monospace;letter-spacing:0.7200000000000006px;">26/08/2021 14:36:10</div>
<div class="r" style="left:1608.00px;top:469.31px;width:200.00px;height:59.33px;background:#f0f3f8;"></div>
<div class="t" style="left:1616.20px;top:492.32px;font-size:15px;line-height:15px;color:#262626;font-family:'Liberation Mono', monospace;letter-spacing:0.7200000000000006px;">26/08/2021 14:36:10</div>
<div class="r" style="left:1810.00px;top:469.31px;width:200.00px;height:59.33px;background:#f0f3f8;"></div>
<div class="t" style="left:1818.20px;top:492.32px;font-size:15px;line-height:15px;color:#262626;font-family:'Liberation Mono', monospace;letter-spacing:0.7200000000000006px;">26/08/2021 14:36:10</div>
<div class="r" style="left:2.00px;top:530.64px;width:103.00px;height:59.33px;background:#dbdbdb;"></div>
<div class="t" style="left:10.50px;top:538.45px;font-size:15px;line-height:15px;color:#262626;font-family:'Liberation Mono', monospace;letter-spacing:0.7200000000000006px;">Source</div>
<div class="t" style="left:10.50px;top:568.95px;font-size:15px;line-height:15px;color:#262626;font-family:'Liberation Mono', monospace;letter-spacing:0.7200000000000006px;">Target</div>
<div class="r" style="left:107.00px;top:530.64px;width:82.00px;height:59.33px;background:#dbdbdb;"></div>
<div class="t" style="left:115.50px;top:553.65px;font-size:15px;line-height:15px;color:#262626;font-family:'Liberation Mono', monospace;letter-spacing:0.7200000000000006px;">84</div>
<div class="r" style="left:191.00px;top:530.64px;width:200.00px;height:59.33px;background:#dbdbdb;"></div>
<div class="t" style="left:199.20px;top:553.65px;font-size:15px;line-height:15px;color:#262626;font-family:'Liberation Mono', monospace;letter-spacing:0.7200000000000006px;">26/08/2021 14:36:10</div>
<div class="r" style="left:393.00px;top:530.64px;width:201.50px;height:59.33px;background:#dbdbdb;"></div>
<div class="t" style="left:401.20px;top:553.65px;font-size:15px;line-height:15px;color:#262626;font-family:'Liberation Mono', monospace;letter-spacing:0.7200000000000006px;">26/08/2021 14:36:10</div>
<div class="r" style="left:596.50px;top:530.64px;width:200.50px;height:59.33px;background:#dbdbdb;"></div>
<div class="t" style="left:604.70px;top:553.65px;font-size:15px;line-height:15px;color:#262626;font-family:'Liberation Mono', monospace;letter-spacing:0.7200000000000006px;">26/08/2021 14:36:10</div>
<div class="r" style="left:799.00px;top:530.64px;width:200.00px;height:59.33px;background:#dbdbdb;"></div>
<div class="t" style="left:807.20px;top:553.65px;font-size:15px;line-height:15px;color:#262626;font-family:'Liberation Mono', monospace;letter-spacing:0.7200000000000006px;">26/08/2021 14:36:10</div>
<div class="r" style="left:1001.00px;top:530.64px;width:200.00px;height:59.33px;background:#dbdbdb;"></div>
<div class="t" style="left:1009.20px;top:553.65px;font-size:15px;line-height:15px;color:#262626;font-family:'Liberation Mono', monospace;letter-spacing:0.7200000000000006px;">26/08/2021 14:36:10</div>
<div class="r" style="left:1203.00px;top:530.64px;width:200.80px;height:59.33px;background:#dbdbdb;"></div>
<div class="t" style="left:1211.20px;top:553.65px;font-size:15px;line-height:15px;color:#262626;font-family:'Liberation Mono', monospace;letter-spacing:0.7200000000000006px;">26/08/2021 14:36:10</div>
<div class="r" style="left:1405.80px;top:530.64px;width:200.20px;height:59.33px;background:#dbdbdb;"></div>
<div class="t" style="left:1414.00px;top:553.65px;font-size:15px;line-height:15px;color:#262626;font-family:'Liberation Mono', monospace;letter-spacing:0.7200000000000006px;">26/08/2021 14:36:10</div>
<div class="r" style="left:1608.00px;top:530.64px;width:200.00px;height:59.33px;background:#dbdbdb;"></div>
<div class="t" style="left:1616.20px;top:553.65px;font-size:15px;line-height:15px;color:#262626;font-family:'Liberation Mono', monospace;letter-spacing:0.7200000000000006px;">26/08/2021 14:36:10</div>
<div class="r" style="left:1810.00px;top:530.64px;width:200.00px;height:59.33px;background:#dbdbdb;"></div>
<div class="t" style="left:1818.20px;top:553.65px;font-size:15px;line-height:15px;color:#262626;font-family:'Liberation Mono', monospace;letter-spacing:0.7200000000000006px;">26/08/2021 14:36:10</div>
<div class="r" style="left:2.00px;top:591.97px;width:103.00px;height:59.33px;background:#f0f3f8;"></div>
<div class="t" style="left:10.50px;top:599.78px;font-size:15px;line-height:15px;color:#262626;font-family:'Liberation Mono', monospace;letter-spacing:0.7200000000000006px;">Source</div>
<div class="t" style="left:10.50px;top:630.28px;font-size:15px;line-height:15px;color:#262626;font-family:'Liberation Mono', monospace;letter-spacing:0.7200000000000006px;">Target</div>
<div class="r" style="left:107.00px;top:591.97px;width:82.00px;height:59.33px;background:#f0f3f8;"></div>
<div class="t" style="left:115.50px;top:614.98px;font-size:15px;line-height:15px;color:#262626;font-family:'Liberation Mono', monospace;letter-spacing:0.7200000000000006px;">82</div>
<div class="r" style="left:191.00px;top:591.97px;width:200.00px;height:59.33px;background:#f0f3f8;"></div>
<div class="t" style="left:199.20px;top:614.98px;font-size:15px;line-height:15px;color:#262626;font-family:'Liberation Mono', monospace;letter-spacing:0.7200000000000006px;">26/08/2021 14:36:10</div>
<div class="r" style="left:393.00px;top:591.97px;width:201.50px;height:59.33px;background:#f0f3f8;"></div>
<div class="t" style="left:401.20px;top:614.98px;font-size:15px;line-height:15px;color:#262626;font-family:'Liberation Mono', monospace;letter-spacing:0.7200000000000006px;">26/08/2021 14:36:10</div>
<div class="r" style="left:596.50px;top:591.97px;width:200.50px;height:59.33px;background:#f0f3f8;"></div>
<div class="t" style="left:604.70px;top:614.98px;font-size:15px;line-height:15px;color:#262626;font-family:'Liberation Mono', monospace;letter-spacing:0.7200000000000006px;">26/08/2021 14:36:10</div>
<div class="r" style="left:799.00px;top:591.97px;width:200.00px;height:59.33px;background:#f0f3f8;"></div>
<div class="t" style="left:807.20px;top:614.98px;font-size:15px;line-height:15px;color:#262626;font-family:'Liberation Mono', monospace;letter-spacing:0.7200000000000006px;">26/08/2021 14:36:10</div>
<div class="r" style="left:1001.00px;top:591.97px;width:200.00px;height:59.33px;background:#f0f3f8;"></div>
<div class="t" style="left:1009.20px;top:614.98px;font-size:15px;line-height:15px;color:#262626;font-family:'Liberation Mono', monospace;letter-spacing:0.7200000000000006px;">26/08/2021 14:36:10</div>
<div class="r" style="left:1203.00px;top:591.97px;width:200.80px;height:59.33px;background:#f0f3f8;"></div>
<div class="t" style="left:1211.20px;top:614.98px;font-size:15px;line-height:15px;color:#262626;font-family:'Liberation Mono', monospace;letter-spacing:0.7200000000000006px;">26/08/2021 14:36:10</div>
<div class="r" style="left:1405.80px;top:591.97px;width:200.20px;height:59.33px;background:#f0f3f8;"></div>
<div class="t" style="left:1414.00px;top:614.98px;font-size:15px;line-height:15px;color:#262626;font-family:'Liberation Mono', monospace;letter-spacing:0.7200000000000006px;">26/08/2021 14:36:10</div>
<div class="r" style="left:1608.00px;top:591.97px;width:200.00px;height:59.33px;background:#f0f3f8;"></div>
<div class="t" style="left:1616.20px;top:614.98px;font-size:15px;line-height:15px;color:#262626;font-family:'Liberation Mono', monospace;letter-spacing:0.7200000000000006px;">26/08/2021 14:36:10</div>
<div class="r" style="left:1810.00px;top:591.97px;width:200.00px;height:59.33px;background:#f0f3f8;"></div>
<div class="t" style="left:1818.20px;top:614.98px;font-size:15px;line-height:15px;color:#262626;font-family:'Liberation Mono', monospace;letter-spacing:0.7200000000000006px;">26/08/2021 14:36:10</div>
<div class="r" style="left:0.00px;top:653.00px;width:1870.00px;height:21.00px;background:#f1f1f1;"></div>
<div class="r" style="left:20.80px;top:655.00px;width:274.20px;height:17.00px;background:#c1c1c1;"></div>
<svg class="r" style="left:8px;top:658px" width="6" height="10" viewBox="0 0 6 10"><path d="M5.5 0.5 L0.5 5 L5.5 9.5 Z" fill="#a3a3a3"/></svg>
<svg class="r" style="left:1856.5px;top:658.5px" width="6" height="10" viewBox="0 0 6 10"><path d="M0.5 0 L5.5 4.7 L0.5 9.5 Z" fill="#505050"/></svg>
</div>
<div class="r" style="left:373px;top:256px;width:317px;height:317px;background:#f9f9f9;border-radius:6px;box-shadow:0 0.5px 2px rgba(0,0,0,0.16)"></div>
<svg class="r" style="left:397px;top:267px" width="16" height="22" viewBox="0 0 16 22"><path d="M8 3 V19.6" stroke="#a6b2c0" stroke-width="2"/><path d="M3 7.4 L8 2.4 L13 7.4" fill="none" stroke="#62788f" stroke-width="1.4"/></svg>
<div class="t" style="left:422.50px;top:269.36px;font-size:18px;line-height:18px;color:#004c97;font-family:'Liberation Sans', sans-serif;">Sort ascending</div>
<svg class="r" style="left:397px;top:311px" width="16" height="22" viewBox="0 0 16 22"><path d="M8 1.9 V18.6" stroke="#a6b2c0" stroke-width="2"/><path d="M3 14.4 L8 19.4 L13 14.4" fill="none" stroke="#62788f" stroke-width="1.4"/></svg>
<div class="t" style="left:422.50px;top:313.76px;font-size:18px;line-height:18px;color:#004c97;font-family:'Liberation Sans', sans-serif;letter-spacing:0.2px;">Sort descending</div>
<div class="r" style="left:394px;top:364.5px;width:12px;height:12.5px;background:#fff"></div>
<svg class="r" style="left:390px;top:350px" width="30" height="30" viewBox="0 0 30 30"><path d="M10 12.1 A6.6 6.6 0 1 1 21.8 17.6 L13.1 25.6" fill="none" stroke="#6f8399" stroke-width="1.6"/><path d="M6.5 8.5 L6.5 14.7 L12.4 14.7 Z" fill="#6f8399"/></svg>
<div class="t" style="left:422.50px;top:357.76px;font-size:18px;line-height:18px;color:#004c97;font-family:'Liberation Sans', sans-serif;">Reset sort</div>
<div class="r" style="left:373.00px;top:388.00px;width:317.00px;height:1.00px;background:#dcdcdc;"></div>
<svg class="r" style="left:393px;top:399px" width="24" height="26" viewBox="0 0 24 26"><path d="M2.5 2.8 H21.5 L14 12.5 V22.5 H10 V12.5 Z" fill="none" stroke="#6f8399" stroke-width="1.5" stroke-linejoin="round"/></svg>
<div class="t" style="left:422.50px;top:402.76px;font-size:18px;line-height:18px;color:#111;font-family:'Liberation Sans', sans-serif;letter-spacing:0.4px;">Column filter:</div>
<div class="r" style="left:394.20px;top:436.30px;width:275.80px;height:36.50px;background:#fff;box-sizing:border-box;border:2px solid #e8950e;border-radius:3px"></div>
<div class="r" style="left:398.50px;top:445.00px;width:1.30px;height:18.00px;background:#000;"></div>
<div class="t" style="left:399.00px;top:446.03px;font-size:16.5px;line-height:16.5px;color:#757575;font-family:'Liberation Sans', sans-serif;">Value to search</div>
<div class="r" style="left:373.00px;top:484.00px;width:317.00px;height:1.00px;background:#dcdcdc;"></div>
<svg class="r" style="left:393px;top:496px" width="24" height="24" viewBox="0 0 24 24"><path d="M2 12 Q12 2 22 12 Q12 22 2 12 Z" fill="none" stroke="#6f8399" stroke-width="1.3"/><circle cx="12" cy="12" r="4" fill="none" stroke="#6f8399" stroke-width="1.3"/><path d="M3 22 L21 3" stroke="#6f8399" stroke-width="1.4"/></svg>
<div class="t" style="left:422.50px;top:498.56px;font-size:18px;line-height:18px;color:#004c97;font-family:'Liberation Sans', sans-serif;letter-spacing:0.4px;">Hide column</div>
<svg class="r" style="left:393px;top:541px" width="24" height="18" viewBox="0 0 24 18"><path d="M2 9 Q12 -2.5 22 9 Q12 20.5 2 9 Z" fill="none" stroke="#6f8399" stroke-width="1.3"/><circle cx="12" cy="9" r="4" fill="none" stroke="#6f8399" stroke-width="1.4"/></svg>
<div class="t" style="left:422.50px;top:542.56px;font-size:18px;line-height:18px;color:#004c97;font-family:'Liberation Sans', sans-serif;letter-spacing:0.25px;">Columns visibility</div>
<div class="t" style="left:29.50px;top:925.89px;font-size:19.5px;line-height:19.5px;color:#1a1a1a;font-family:'Liberation Sans', sans-serif;letter-spacing:-0.2px;">Display</div>
<div class="r" style="left:98.00px;top:925.20px;width:66.70px;height:23.40px;background:#fff;box-sizing:border-box;border:1px solid #767676;border-radius:2px"></div>
<div class="t" style="left:104.00px;top:929.27px;font-size:14.8px;line-height:14.8px;color:#000;font-family:'Liberation Sans', sans-serif;letter-spacing:0.4px;">10</div>
<svg class="r" style="left:146px;top:932px" width="14" height="10" viewBox="0 0 14 10"><path d="M2 2.5 L7 7.5 L12 2.5" fill="none" stroke="#000" stroke-width="1.8"/></svg>
<div class="t" style="left:170.00px;top:925.47px;font-size:20px;line-height:20px;color:#1a1a1a;font-family:'Liberation Sans', sans-serif;">records</div>
<div class="t" style="left:1431.80px;top:926.91px;font-size:19px;line-height:19px;color:#8a8a8a;font-family:'Liberation Sans', sans-serif;">Previous</div>
<div class="t" style="left:1537.20px;top:927.76px;font-size:18px;line-height:18px;color:#111;font-family:'Liberation Sans', sans-serif;font-weight:bold">1</div>
<div class="t" style="left:1576.80px;top:927.76px;font-size:18px;line-height:18px;color:#111;font-family:'Liberation Sans', sans-serif;">2</div>
<div class="t" style="left:1617.30px;top:927.76px;font-size:18px;line-height:18px;color:#111;font-family:'Liberation Sans', sans-serif;">3</div>
<div class="t" style="left:1657.20px;top:927.76px;font-size:18px;line-height:18px;color:#111;font-family:'Liberation Sans', sans-serif;">4</div>
<div class="t" style="left:1698.00px;top:927.76px;font-size:18px;line-height:18px;color:#111;font-family:'Liberation Sans', sans-serif;">5</div>
<div class="t" style="left:1723.50px;top:927.76px;font-size:18px;line-height:18px;color:#111;font-family:'Liberation Sans', sans-serif;">...</div>
<div class="t" style="left:1753.00px;top:927.76px;font-size:18px;line-height:18px;color:#111;font-family:'Liberation Sans', sans-serif;">47501</div>
<div class="t" style="left:1835.00px;top:927.76px;font-size:18px;line-height:18px;color:#111;font-family:'Liberation Sans', sans-serif;letter-spacing:1.3px">Next</div>
<svg class="r" style="left:23px;top:980px" width="28" height="26" viewBox="0 0 28 26"><path d="M13.7 2 V18" stroke="#004c97" stroke-width="2.6"/><path d="M6 11 L13.7 18.7 L21.4 11" fill="none" stroke="#004c97" stroke-width="2.6"/><path d="M3.5 17.5 V22 Q3.5 23.5 5 23.5 H22.5 Q24 23.5 24 22 V17.5" fill="none" stroke="#004c97" stroke-width="2.6"/></svg>
<div class="t" style="left:54.00px;top:985.24px;font-size:18.5px;line-height:18.5px;color:#004c97;font-family:'Liberation Sans', sans-serif;-webkit-text-stroke:0.5px #004c97;letter-spacing:0.2px">Export to CSV</div>
</body></html>
